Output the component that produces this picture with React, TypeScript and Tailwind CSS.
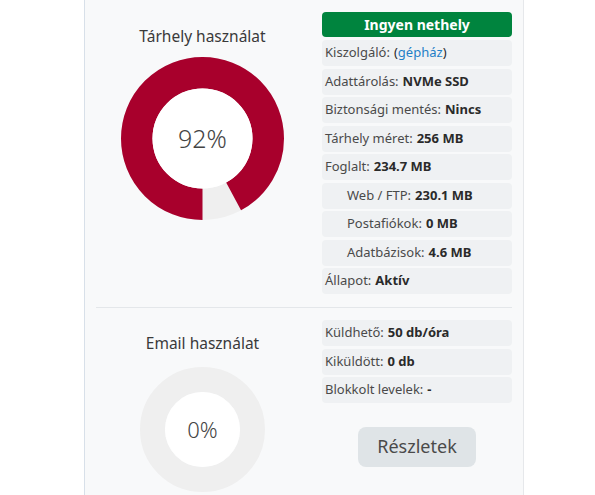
import React from "react";

type Row = { label: string; value?: React.ReactNode; indent?: boolean };

const storageRows: Row[] = [
  {
    label: "Kiszolgáló:",
    value: (
      <span className="font-normal">
        (<span className="text-[#1f7fc7]">gépház</span>)
      </span>
    ),
  },
  { label: "Adattárolás:", value: "NVMe SSD" },
  { label: "Biztonsági mentés:", value: "Nincs" },
  { label: "Tárhely méret:", value: "256 MB" },
  { label: "Foglalt:", value: "234.7 MB" },
  { label: "Web / FTP:", value: "230.1 MB", indent: true },
  { label: "Postafiókok:", value: "0 MB", indent: true },
  { label: "Adatbázisok:", value: "4.6 MB", indent: true },
  { label: "Állapot:", value: "Aktív" },
];

const emailRows: Row[] = [
  { label: "Küldhető:", value: "50 db/óra" },
  { label: "Kiküldött:", value: "0 db" },
  { label: "Blokkolt levelek:", value: "-" },
];

function Donut({ size, thickness, percent, label, textClass }: {
  size: number;
  thickness: number;
  percent: number;
  label: string;
  textClass: string;
}) {
  const r = size / 2 - thickness / 2;
  const c = 2 * Math.PI * r;
  const inner = size / 2 - thickness;
  return (
    <div className="relative" style={{ width: size, height: size }}>
      <svg width={size} height={size} viewBox={`0 0 ${size} ${size}`}>
        <circle cx={size / 2} cy={size / 2} r={r} fill="none" stroke="#efefef" strokeWidth={thickness} />
        {percent > 0 && (
          <circle
            cx={size / 2}
            cy={size / 2}
            r={r}
            fill="none"
            stroke="#a8002c"
            strokeWidth={thickness}
            strokeDasharray={`${(percent / 100) * c} ${c}`}
            transform={`rotate(90 ${size / 2} ${size / 2})`}
          />
        )}
        <circle cx={size / 2} cy={size / 2} r={inner} fill="#ffffff" />
      </svg>
      <div className={`absolute inset-0 flex items-center justify-center font-light text-[#444] ${textClass}`}>
        {label}
      </div>
    </div>
  );
}

function InfoRow({ row }: { row: Row }) {
  return (
    <div
      className={`h-[26px] flex items-center rounded bg-[#eff1f3] text-[13px] text-[#4a4a4a] ${
        row.indent ? "pl-[25px]" : "pl-[3px]"
      }`}
    >
      <span>{row.label}</span>
      {row.value !== undefined && <span className="ml-1 font-bold text-[#2a2a2a]">{row.value}</span>}
    </div>
  );
}

export default function App() {
  return (
    <div className="min-h-[495px] bg-white" style={{ fontFamily: '"Noto Sans", "DejaVu Sans", sans-serif' }}>
      <div className="ml-[84px] w-[440px] min-h-[495px] bg-[#f8f9fa] border-l border-[#d8e0e9] border-r border-r-[#e6e8eb] px-[11px]">
        {/* Tárhely */}
        <div className="flex gap-[13px] pt-[12px] pb-[13px] border-b border-[#e4e7ea]">
          <div className="flex-1 flex flex-col items-center pt-[14px]">
            <div className="text-[15.5px] leading-[20px] text-[#3a3a3a]">Tárhely használat</div>
            <div className="mt-[11px]">
              <Donut size={163} thickness={31.5} percent={92} label="92%" textClass="text-[25px]" />
            </div>
          </div>
          <div className="w-[190px] flex flex-col gap-[2.5px]">
            <div className="h-[25px] mb-[0.5px] rounded bg-[#00843e] text-white font-bold text-[14px] flex items-center justify-center">
              Ingyen nethely
            </div>
            {storageRows.map((r) => (
              <InfoRow key={r.label} row={r} />
            ))}
          </div>
        </div>

        {/* Email */}
        <div className="flex gap-[13px] pt-[12px]">
          <div className="flex-1 flex flex-col items-center pt-[13px]">
            <div className="text-[15.5px] leading-[20px] text-[#3a3a3a]">Email használat</div>
            <div className="mt-[14px]">
              <Donut size={125} thickness={25} percent={0} label="0%" textClass="text-[22px]" />
            </div>
          </div>
          <div className="w-[190px] flex flex-col gap-[2.5px]">
            {emailRows.map((r) => (
              <InfoRow key={r.label} row={r} />
            ))}
            <div className="flex justify-center mt-[21px]">
              <button className="w-[118px] h-[40px] rounded-lg bg-[#dfe4e7] text-[18px] text-[#4a4a4a]">
                Részletek
              </button>
            </div>
          </div>
        </div>
      </div>
    </div>
  );
}
